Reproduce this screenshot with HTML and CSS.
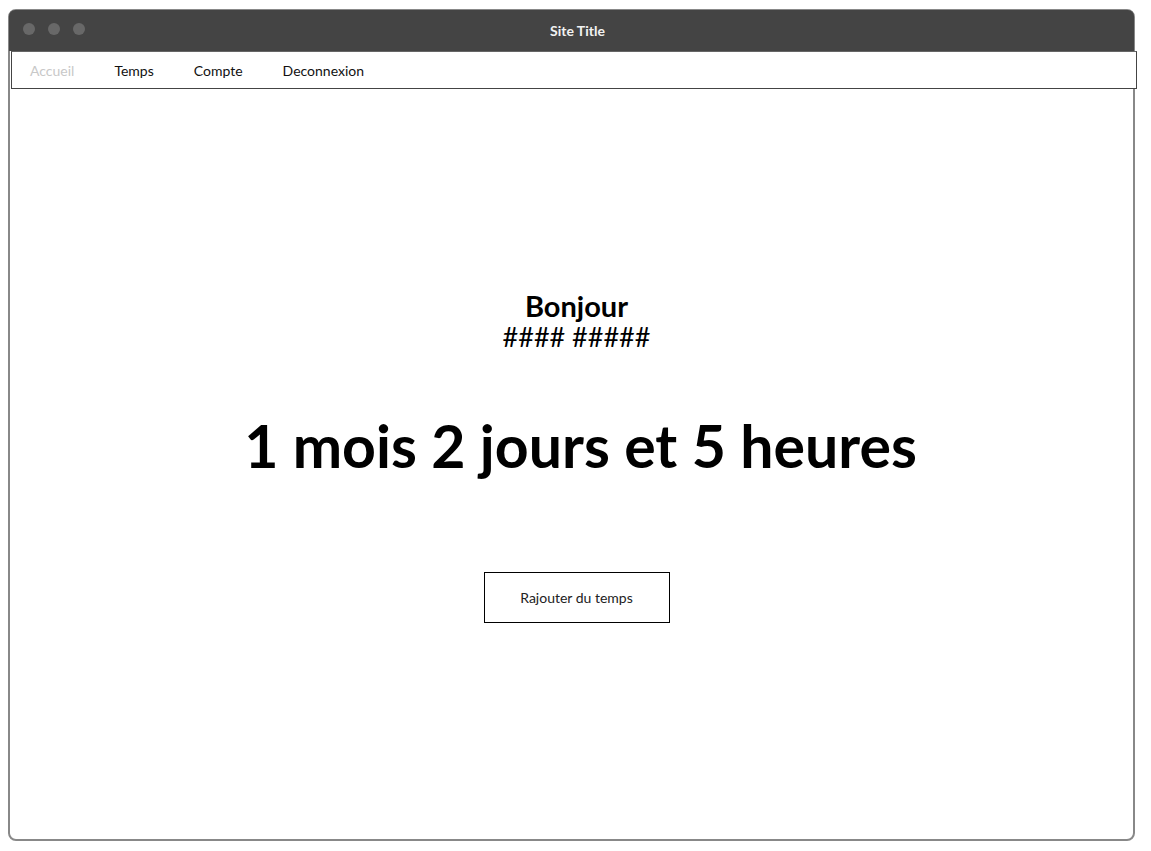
FILE: index.html
```html
<!DOCTYPE html>
<html lang="fr">
<head>
<meta charset="utf-8">
<title>Site Title</title>
<link rel="stylesheet" href="styles.css">
</head>
<body>
<div class="window">
  <div class="titlebar">
    <div class="dots"><span class="dot"></span><span class="dot"></span><span class="dot"></span></div>
    <div class="title">Site Title</div>
  </div>
  <nav class="nav">
    <a class="nav-item active">Accueil</a>
    <a class="nav-item">Temps</a>
    <a class="nav-item">Compte</a>
    <a class="nav-item">Deconnexion</a>
  </nav>
  <main class="content">
    <div class="greeting">
      <div class="hello">Bonjour</div>
      <div class="name">#### #####</div>
    </div>
    <div class="duration">1 mois 2 jours et 5 heures</div>
    <button class="btn">Rajouter du temps</button>
  </main>
</div>
</body>
</html>
```
FILE: styles.css
```css
html, body {
  margin: 0;
  padding: 0;
  background: #fff;
}
body {
  font-family: "Lato", "Open Sans", sans-serif;
  color: #000;
  padding: 9px 0 0 8px;
}
.window {
  width: 1127px;
  height: 832px;
  box-sizing: border-box;
  border: 2px solid #888;
  border-radius: 8px;
  display: flex;
  flex-direction: column;
}
.titlebar {
  height: 41px;
  background: #444;
  border-radius: 6px 6px 0 0;
  position: relative;
  display: flex;
  align-items: center;
  justify-content: center;
  margin: -1px -1px 0;
  padding-left: 12px;
}
.dots {
  position: absolute;
  left: 14px;
  top: 13px;
  display: flex;
  gap: 13px;
}
.dot {
  width: 12px;
  height: 12px;
  border-radius: 50%;
  background: #686868;
}
.title {
  color: #f2f2f2;
  font-weight: 700;
  font-size: 14px;
  margin-top: -1px;
}
.nav {
  margin-left: 1px;
  width: 1126px;
  height: 38px;
  box-sizing: border-box;
  border: 1px solid #444;
  border-top-color: #666;
  display: flex;
  align-items: center;
  padding-left: 18px;
  padding-top: 0;
  background: #fff;
}
.nav-item {
  font-size: 14px;
  color: #111;
  margin-right: 40px;
}
.nav-item.active {
  color: #c8c8c8;
}
.content {
  flex: 1;
  display: flex;
  flex-direction: column;
  align-items: center;
  padding-left: 10px;
}
.greeting {
  margin-top: 202px;
  text-align: center;
}
.hello {
  font-size: 29px;
  font-weight: 700;
  line-height: 30px;
}
.name {
  font-size: 27px;
  line-height: 31px;
}
.duration {
  margin-top: 58px;
  padding-left: 8px;
  font-size: 59px;
  font-weight: 700;
  line-height: 72px;
}
.btn {
  margin-top: 90px;
  width: 186px;
  height: 51px;
  border: 1px solid #000;
  background: #fff;
  font-family: inherit;
  font-size: 14px;
  color: #222;
  padding: 0;
}
```
